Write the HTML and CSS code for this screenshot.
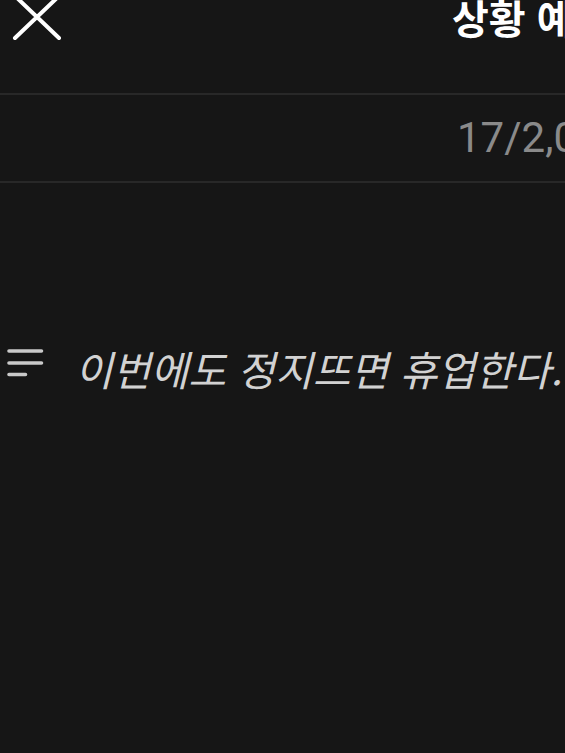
FILE: index.html
```html
<!DOCTYPE html>
<html lang="ko">
<head>
<meta charset="utf-8">
<link rel="stylesheet" href="styles.css">
</head>
<body>
<div class="screen">
  <header class="header">
    <svg class="close" width="60" height="45" viewBox="0 0 60 45" aria-hidden="true">
      <path d="M15 -4 L59 38 M59 -4 L15 38" stroke="#ffffff" stroke-width="4" stroke-linecap="round" fill="none"/>
    </svg>
    <h1 class="title">상황 예시</h1>
  </header>
  <div class="counter">17/2,000</div>
  <div class="content">
    <div class="line">
      <svg class="lines" width="75" height="40" viewBox="0 0 75 40" aria-hidden="true">
        <path d="M9 13 H41.5 M9 25 H41.5 M9 36.5 H25.5" stroke="#c9c9c9" stroke-width="3.6" stroke-linecap="round" fill="none"/>
      </svg>
      <p class="text">이번에도 정지뜨면 휴업한다.</p>
    </div>
  </div>
</div>
</body>
</html>
```

FILE: styles.css
```css
html, body {
  margin: 0;
  padding: 0;
  background: #161616;
}
.screen {
  width: 565px;
  height: 753px;
  overflow: hidden;
  background: #161616;
}
.header {
  display: flex;
  align-items: flex-start;
  height: 93px;
  border-bottom: 2px solid #282828;
  overflow: hidden;
  white-space: nowrap;
}
.close {
  flex: none;
  overflow: visible;
}
.title {
  margin: -3px 0 0 392px;
  font-family: "Noto Sans CJK KR", "Noto Sans", sans-serif;
  font-size: 40px;
  line-height: 40px;
  font-weight: 700;
  color: #ffffff;
  flex: none;
}
.counter {
  height: 86px;
  line-height: 86px;
  border-bottom: 2px solid #282828;
  padding-left: 457px;
  font-family: Roboto, "Liberation Sans", sans-serif;
  font-size: 42px;
  color: #8a8a8a;
  white-space: nowrap;
  overflow: hidden;
}
.content {
  padding-top: 155px;
}
.line {
  display: flex;
  align-items: flex-start;
  height: 60px;
}
.lines {
  flex: none;
}
.text {
  margin: 0;
  font-family: "Noto Sans CJK KR", "Noto Sans", sans-serif;
  font-size: 41px;
  line-height: 60px;
  font-style: italic;
  font-weight: 400;
  color: #d2d2d2;
  white-space: nowrap;
}
```
